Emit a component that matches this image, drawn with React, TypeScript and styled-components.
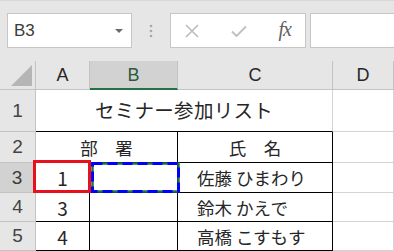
import styled, { createGlobalStyle } from "styled-components";

const GlobalStyle = createGlobalStyle`
  html, body {
    margin: 0;
    padding: 0;
  }
  body {
    background: #ffffff;
    font-family: "Noto Sans CJK JP", "Noto Sans", sans-serif;
    overflow: hidden;
  }
`;

const GRID = "#d4d4d4";
const INK = "#000000";
const HEAD_LINE = "#c3c3c3";
const EXCEL_GREEN = "#217346";

const Window = styled.div`
  width: 394px;
  height: 251px;
  overflow: hidden;
  display: flex;
  flex-direction: column;
  background: #ffffff;
`;

/* ---------- formula bar ---------- */

const FormulaBar = styled.div`
  height: 61px;
  flex: none;
  box-sizing: border-box;
  background: #e6e6e6;
  border-top: 1px solid #d8d8d8;
  display: flex;
  align-items: flex-start;
  padding: 12px 0 0 7px;
`;

const Field = styled.div`
  height: 35px;
  box-sizing: border-box;
  background: #ffffff;
  border: 1px solid #c6c6c6;
  display: flex;
  align-items: center;
`;

const NameBox = styled(Field)`
  width: 125px;
  padding: 0 8px 0 6px;
  justify-content: space-between;
  font-family: "Liberation Sans", Arial, sans-serif;
  font-size: 17px;
  color: #3c3c3c;
`;

const Caret = styled.span`
  width: 0;
  height: 0;
  border-left: 4px solid transparent;
  border-right: 4px solid transparent;
  border-top: 4px solid #6a6a6a;
  margin-top: 1px;
`;

const Grip = styled.div`
  width: 38px;
  height: 35px;
  display: flex;
  align-items: center;
  justify-content: center;
`;

const FxGroup = styled(Field)`
  width: 136px;
  padding: 0 14px 0 14px;
  justify-content: space-between;
`;

const FxMark = styled.span`
  font-family: "Liberation Serif", "DejaVu Serif", serif;
  font-style: italic;
  font-size: 20px;
  color: #5f5f5f;
  letter-spacing: -1px;
  margin-top: -3px;
`;

const FormulaInput = styled(Field)`
  flex: 1;
  margin-left: 4px;
  border-right: none;
`;

/* ---------- sheet ---------- */

const Sheet = styled.div`
  flex: 1;
  display: grid;
  grid-template-columns: 36px 54px 88px 155px 1fr;
  grid-template-rows: 29px 42px 31px 30px 29px 29px;
  font-family: "Noto Sans CJK JP", sans-serif;
  color: #262626;
`;

const HeadBase = styled.div<{ $selected?: boolean }>`
  box-sizing: border-box;
  display: flex;
  align-items: center;
  justify-content: center;
  font-family: "Liberation Sans", Arial, sans-serif;
  font-size: 18px;
  background: ${(p) => (p.$selected ? "#d2d2d2" : "#e6e6e6")};
  color: ${(p) => (p.$selected ? "#2b5a3c" : "#262626")};
`;

const Corner = styled(HeadBase)`
  position: relative;
  border-right: 1px solid ${HEAD_LINE};
  border-bottom: 1px solid ${HEAD_LINE};
  &::after {
    content: "";
    position: absolute;
    right: 3px;
    bottom: 3px;
    width: 0;
    height: 0;
    border-left: 21px solid transparent;
    border-bottom: 21px solid #b5b5b5;
  }
`;

const ColHead = styled(HeadBase)`
  border-right: 1px solid ${HEAD_LINE};
  border-bottom: ${(p) =>
    p.$selected ? `2px solid ${EXCEL_GREEN}` : `1px solid ${HEAD_LINE}`};
  padding-top: ${(p) => (p.$selected ? "1px" : "0")};
`;

const RowHead = styled(HeadBase)`
  border-right: ${(p) =>
    p.$selected ? `2px solid ${EXCEL_GREEN}` : `1px solid ${HEAD_LINE}`};
  border-bottom: 1px solid ${HEAD_LINE};
  color: ${(p) => (p.$selected ? "#3a3a3a" : "#444444")};
  font-size: 19px;
`;

const Cell = styled.div<{
  $right?: string;
  $bottom?: string;
  $span?: number;
  $left?: boolean;
  $size?: number;
}>`
  position: relative;
  box-sizing: border-box;
  display: flex;
  align-items: center;
  justify-content: ${(p) => (p.$left ? "flex-start" : "center")};
  padding-left: ${(p) => (p.$left ? "19px" : "0")};
  grid-column: ${(p) => (p.$span ? `span ${p.$span}` : "auto")};
  border-right: 1px solid ${(p) => p.$right ?? GRID};
  border-bottom: 1px solid ${(p) => p.$bottom ?? GRID};
  font-size: ${(p) => p.$size ?? 17.5}px;
  white-space: nowrap;
`;

const Title = styled(Cell)`
  font-size: 19.5px;
  letter-spacing: 0.3px;
  padding-bottom: 2px;
`;

const CutMarker = styled.div`
  position: absolute;
  left: -3px;
  top: -3px;
  width: 58px;
  height: 33px;
  box-sizing: border-box;
  border: 3px solid #e8101c;
  z-index: 2;
`;

const CopyMarquee = styled.svg`
  position: absolute;
  left: 1px;
  top: -1px;
  z-index: 2;
  overflow: visible;
`;

const GripIcon = () => (
  <svg width="4" height="14" viewBox="0 0 4 14">
    <circle cx="2" cy="2" r="1.3" fill="#a8a8a8" />
    <circle cx="2" cy="7" r="1.3" fill="#a8a8a8" />
    <circle cx="2" cy="12" r="1.3" fill="#a8a8a8" />
  </svg>
);

const CancelIcon = () => (
  <svg width="14" height="14" viewBox="0 0 14 14">
    <path d="M1 1 L13 13 M13 1 L1 13" stroke="#bcbcbc" strokeWidth="1.6" />
  </svg>
);

const EnterIcon = () => (
  <svg width="16" height="12" viewBox="0 0 16 12">
    <path
      d="M1 6.5 L5.5 11 L15 1.5"
      stroke="#c2c2c2"
      strokeWidth="2"
      fill="none"
    />
  </svg>
);

const rows = [
  { n: "3", dept: "1", name: "佐藤 ひまわり", selected: true },
  { n: "4", dept: "3", name: "鈴木 かえで" },
  { n: "5", dept: "4", name: "高橋 こすもす" },
];

const App = () => {
  return (
    <>
      <GlobalStyle />
      <Window>
        <FormulaBar>
          <NameBox>
            <span>B3</span>
            <Caret />
          </NameBox>
          <Grip>
            <GripIcon />
          </Grip>
          <FxGroup>
            <CancelIcon />
            <EnterIcon />
            <FxMark>fx</FxMark>
          </FxGroup>
          <FormulaInput />
        </FormulaBar>

        <Sheet>
          <Corner />
          <ColHead>A</ColHead>
          <ColHead $selected>B</ColHead>
          <ColHead>C</ColHead>
          <ColHead>D</ColHead>

          <RowHead>1</RowHead>
          <Title $span={3} $bottom={INK}>
            セミナー参加リスト
          </Title>
          <Cell />

          <RowHead>2</RowHead>
          <Cell $span={2} $right={INK} $bottom={INK}>
            部　署
          </Cell>
          <Cell $right={INK} $bottom={INK}>
            氏　名
          </Cell>
          <Cell />

          {rows.map((r) => (
            <Row key={r.n} {...r} />
          ))}
        </Sheet>
      </Window>
    </>
  );
};

const Row = ({
  n,
  dept,
  name,
  selected,
}: {
  n: string;
  dept: string;
  name: string;
  selected?: boolean;
}) => (
  <>
    <RowHead $selected={selected}>{n}</RowHead>
    <Cell $right={INK} $bottom={INK} $size={19}>
      {dept}
      {selected && <CutMarker />}
    </Cell>
    <Cell $right={INK} $bottom={INK}>
      {selected && (
        <CopyMarquee width="89" height="31" viewBox="0 0 89 31">
          <rect
            x="1.5"
            y="1.5"
            width="86"
            height="28"
            fill="none"
            stroke={EXCEL_GREEN}
            strokeWidth="2.5"
          />
          <rect
            x="1.5"
            y="1.5"
            width="86"
            height="28"
            fill="none"
            stroke="#0000ff"
            strokeWidth="3"
            strokeDasharray="10 5"
          />
        </CopyMarquee>
      )}
    </Cell>
    <Cell $right={INK} $bottom={INK} $left>
      {name}
    </Cell>
    <Cell />
  </>
);

export default App;
